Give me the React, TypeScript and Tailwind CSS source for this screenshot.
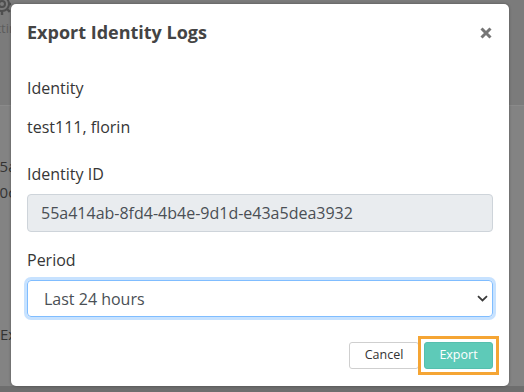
import type { ReactNode } from "react";

function CloseIcon() {
  return (
    <svg width="12" height="12" viewBox="0 0 12 12" className="block">
      <path d="M1.5 1.5 L10.5 10.5 M10.5 1.5 L1.5 10.5" stroke="#757575" strokeWidth="3" />
    </svg>
  );
}

function Chevron() {
  return (
    <svg width="11" height="7" viewBox="0 0 11 7" className="block">
      <path d="M1 1.2 L5.5 5.5 L10 1.2" fill="none" stroke="#3a3a3a" strokeWidth="1.8" />
    </svg>
  );
}

function Gear() {
  return (
    <svg width="24" height="24" viewBox="0 0 24 24" className="block">
      <circle cx="12" cy="12" r="7" fill="none" stroke="#4e4e4e" strokeWidth="2" />
      <circle cx="12" cy="12" r="3" fill="none" stroke="#4e4e4e" strokeWidth="2" />
      <path d="M12 1v4M12 19v4M1 12h4M19 12h4M4.2 4.2l2.8 2.8M17 17l2.8 2.8M4.2 19.8 7 17M17 7l2.8-2.8" stroke="#4e4e4e" strokeWidth="2.4" />
    </svg>
  );
}

function Label({ children, className = "" }: { children: ReactNode; className?: string }) {
  return <div className={`text-[16px] leading-[22px] text-[#363636] ${className}`}>{children}</div>;
}

export default function App() {
  return (
    <div className="relative h-[392px] w-[524px] overflow-hidden bg-[#838383] font-['Open_Sans',sans-serif]">
      {/* dimmed page behind the backdrop, only its left edge shows */}
      <div className="flex h-full flex-col">
        <div className="h-[106px] border-b border-[#8a8a8a] bg-[#7b7b7b]">
          <div className="flex w-[11px] flex-col overflow-hidden whitespace-nowrap">
            <div className="-ml-[10px] -mt-[8px]">
              <Gear />
            </div>
            <div className="-ml-[18px] mt-[3px] text-[13px] leading-[18px] text-[#5c5c5c]">Settings</div>
          </div>
        </div>
        <div className="flex-1">
          <div className="flex w-[11px] flex-col overflow-hidden whitespace-nowrap text-[15px] leading-[20px] text-[#333]">
            <div className="-ml-[9px] mt-[50px]">55a414ab</div>
            <div className="-ml-[9px] mt-[6px]">00c1e2a7</div>
            <div className="mt-[122px]">Export</div>
          </div>
        </div>
        <div className="h-[6px] bg-[#6e6e6e]" />
      </div>

      {/* modal */}
      <div className="absolute left-[11px] top-[4px] flex h-[382px] w-[498px] flex-col rounded-[5px] bg-white shadow-[0_0_3px_rgba(0,0,0,0.35)]">
        <div className="flex items-center justify-between pl-4 pr-[17px] pt-[15px]">
          <h2 className="text-[18px] font-bold leading-[27px] text-[#444]">Export Identity Logs</h2>
          <button className="p-0">
            <CloseIcon />
          </button>
        </div>

        <div className="flex flex-col px-4 pt-[31px]">
          <Label>Identity</Label>
          <div className="mt-[17px] text-[16px] leading-[22px] text-[#363636]">test111, florin</div>

          <Label className="mt-[25px]">Identity ID</Label>
          <div className="mt-[9px] flex h-[38px] items-center rounded-[4px] border border-[#ced4da] bg-[#e9ecef] px-[13px] text-[16px] text-[#4a4f55]">
            55a414ab-8fd4-4b4e-9d1d-e43a5dea3932
          </div>

          <Label className="mt-[17px]">Period</Label>
          <div className="mt-[9px] flex h-[37px] items-center justify-between rounded-[4px] border border-[#80bdff] pl-4 pr-[4px] text-[16px] text-[#4a4f55] shadow-[0_0_0_3px_rgba(0,123,255,0.22)]">
            <span>Last 24 hours</span>
            <Chevron />
          </div>
        </div>

        <div className="mt-[25px] flex justify-end gap-[5px] px-4">
          <button className="h-[27px] w-[70px] rounded-[3px] border border-[#cfcfcf] bg-white text-[12.5px] text-[#333]">
            Cancel
          </button>
          <button className="relative h-[27px] w-[69px] rounded-[3px] border border-[#55bfae] bg-[#5ecab8] text-[12.5px] text-white">
            Export
            {/* focus highlight drawn around the button */}
            <span className="pointer-events-none absolute -inset-[7px] border-[3px] border-[#f5a534]" />
          </button>
        </div>
      </div>
    </div>
  );
}
